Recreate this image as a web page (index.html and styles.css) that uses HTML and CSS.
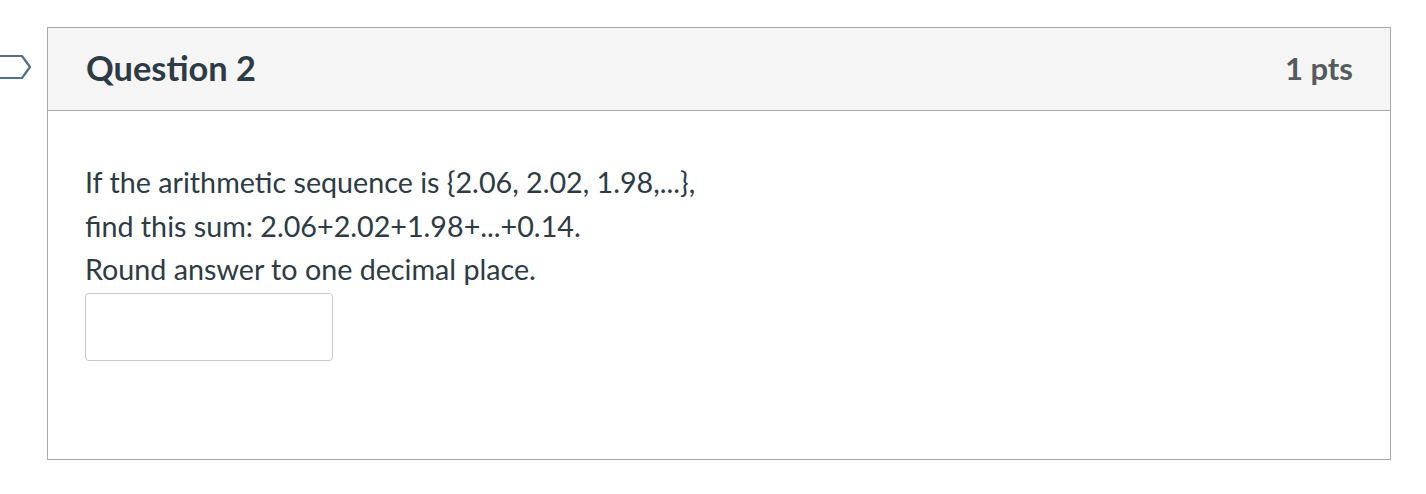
FILE: index.html
```html
<!DOCTYPE html>
<html>
<head>
<meta charset="utf-8">
<link rel="stylesheet" href="styles.css">
</head>
<body>
<div class="page">
  <div class="flag">
    <svg width="34" height="26" viewBox="0 0 34 26"><path d="M-4 2 H22 L30 13 L22 24 H-4" fill="none" stroke="#4d7291" stroke-width="2.2" stroke-linejoin="round"/></svg>
  </div>
  <div class="card">
    <div class="card-header">
      <h2 class="title">Question 2</h2>
      <span class="pts">1 pts</span>
    </div>
    <div class="card-body">
      <p class="text">If the arithmetic sequence is {2.06, 2.02, 1.98,...},<br>find this sum: 2.06+2.02+1.98+...+0.14.<br>Round answer to one decimal place.</p>
      <input class="answer" type="text">
    </div>
  </div>
</div>
</body>
</html>
```
FILE: styles.css
```css
html, body { margin: 0; padding: 0; background: #fff; }
body { font-family: Lato, "Liberation Sans", sans-serif; color: #2d3b45; }
.page { position: relative; padding: 27px 0 0 47px; width: 1344px; }
.flag { position: absolute; left: 0; top: 54px; width: 34px; height: 26px; }
.card { border: 1px solid #aaaaaa; width: 1342px; }
.card-header { background: #f5f5f5; border-bottom: 1px solid #aaaaaa; height: 82px; display: flex; align-items: center; justify-content: space-between; padding: 0 37px 0 38px; }
.title { margin: 0 0 4px; font-size: 34.4px; font-weight: 700; color: #2d3b45; }
.pts { font-size: 31px; font-weight: 700; color: #555a5e; margin-bottom: 2px; }
.card-body { padding: 50px 38px 98px 37px; }
.text { margin: 0; font-size: 28.7px; line-height: 43.5px; color: #2d3b45; }
.answer { display: block; margin-top: 1px; width: 248px; height: 68px; box-sizing: border-box; border: 1px solid #c8c8c8; border-radius: 4px; background: #fff; }
```
